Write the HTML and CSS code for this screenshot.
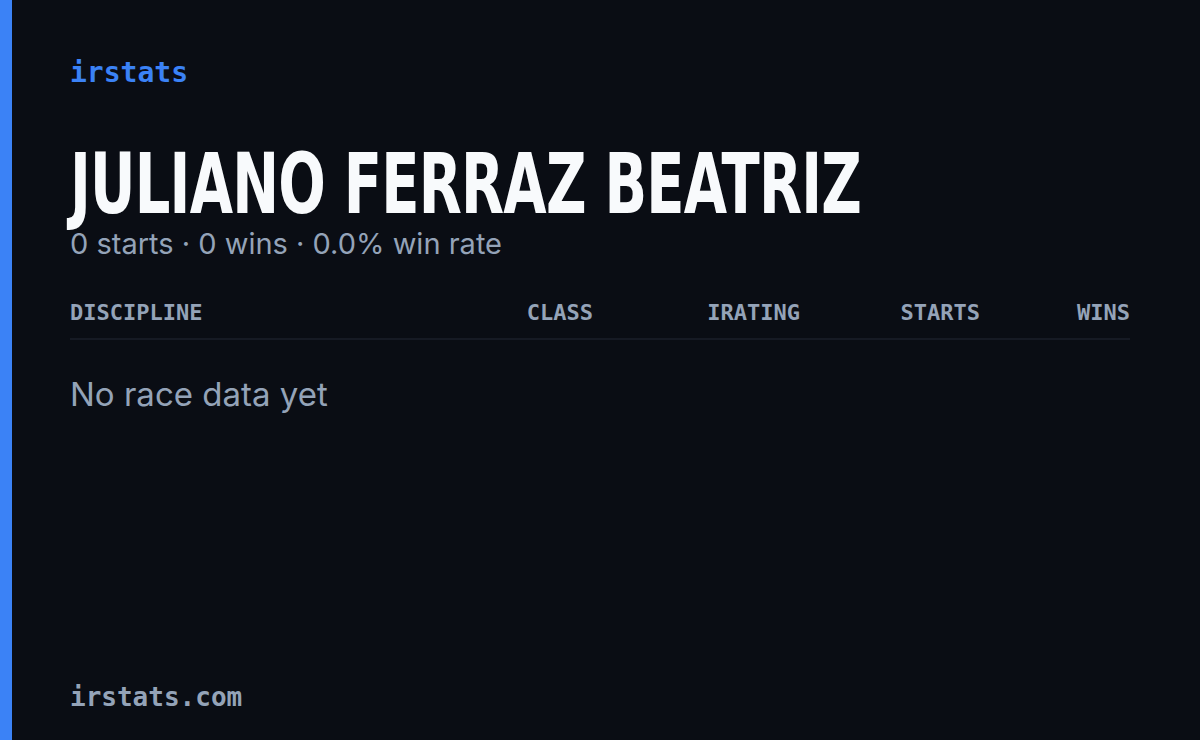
FILE: index.html
```html
<!DOCTYPE html>
<html lang="en">
<head>
    <meta charset="UTF-8">
    <meta name="viewport" content="width=device-width, initial-scale=1.0">
    <title>irstats - Juliano Ferraz Beatriz</title>
    <link rel="stylesheet" href="styles.css">
</head>
<body>
    <div class="card">
        <div class="brand">irstats</div>
        <h1 class="name"><span>JULIANO FERRAZ BEATRIZ</span></h1>
        <p class="summary">0 starts · 0 wins · 0.0% win rate</p>

        <div class="table-head">
            <span>DISCIPLINE</span>
            <span class="num">CLASS</span>
            <span class="num">IRATING</span>
            <span class="num">STARTS</span>
            <span class="num">WINS</span>
        </div>
        <p class="empty">No race data yet</p>

        <div class="footer">irstats.com</div>
    </div>
</body>
</html>
```

FILE: styles.css
```css
*{
    margin: 0;
    padding: 0;
    box-sizing: border-box;
}
body{
    background-color: #0a0d14;
    font-family: "Inter", "Noto Sans", sans-serif;
}
.card{
    height: 740px;
    width: 1200px;
    border-left: 12px solid #3b82f6;
    padding: 56px 70px 28px 58px;
    display: flex;
    flex-direction: column;
}
.brand{
    font-family: "DejaVu Sans Mono", monospace;
    font-size: 28px;
    font-weight: bold;
    color: #3b82f6;
    line-height: 34px;
}
.name{
    margin-top: 54px;
    height: 80px;
    font-family: "DejaVu Sans Condensed", "DejaVu Sans", sans-serif;
    font-weight: bold;
    font-size: 84px;
    line-height: 80px;
    color: #f8fafc;
    white-space: nowrap;
}
.name span{
    display: inline-block;
    transform: scaleX(0.74);
    transform-origin: left center;
    letter-spacing: -1px;
}
.summary{
    margin-top: 2px;
    font-size: 29px;
    color: #94a3b8;
    line-height: 36px;
}
.table-head{
    margin-top: 36px;
    display: grid;
    grid-template-columns: 1fr 120px 207px 180px 150px;
    padding-bottom: 10px;
    border-bottom: 2px solid #161a24;
    font-family: "DejaVu Sans Mono", monospace;
    font-size: 22px;
    font-weight: bold;
    color: #94a3b8;
    line-height: 30px;
}
.num{
    text-align: right;
}
.empty{
    margin-top: 34px;
    font-size: 33px;
    color: #94a3b8;
    line-height: 40px;
}
.footer{
    margin-top: auto;
    font-family: "DejaVu Sans Mono", monospace;
    font-size: 26px;
    font-weight: bold;
    color: #94a3b8;
}
```
